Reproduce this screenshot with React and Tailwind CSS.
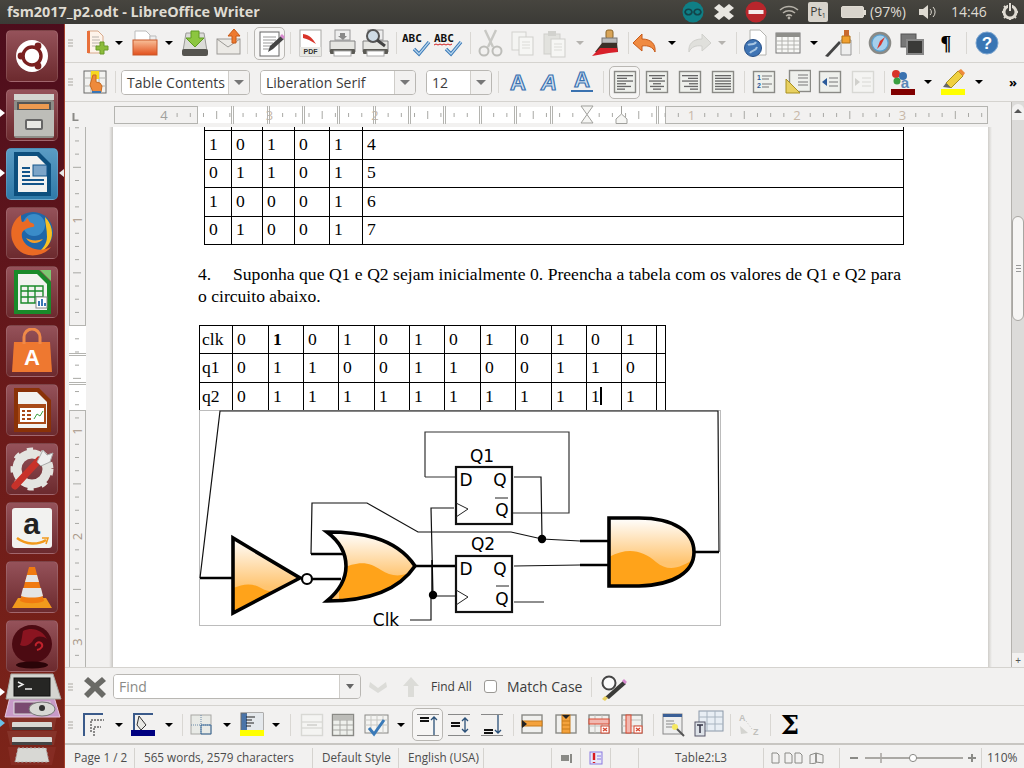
const Ic = ({ w = 32, h = 32, children }) => (
  <svg width={w} height={h} viewBox={`0 0 ${w} ${h}`} className="block shrink-0">{children}</svg>
)

const Slot = ({ w, children }) => <div className={`${w} flex justify-center items-center shrink-0`}>{children}</div>
const Sep = ({ w }) => <div className={`${w} flex justify-center shrink-0`}><div className="w-px h-[22px] bg-[#d9d7d3]" /></div>
const Grip = () => (
  <div className="w-[13px] shrink-0 flex flex-col items-center gap-[1px]">
    <div className="w-[5px] h-[2px] bg-[#cfcdc9] ml-[-2px]" />
    <div className="w-[5px] h-[2px] bg-[#cfcdc9] ml-[-2px]" />
    <div className="w-[5px] h-[2px] bg-[#cfcdc9] ml-[-2px]" />
  </div>
)
const Arrow = ({ w, off }) => (
  <Slot w={w}>
    <div className={`w-0 h-0 border-l-[4px] border-r-[4px] border-t-[4px] border-l-transparent border-r-transparent ${off ? "border-t-[#b5b3af]" : "border-t-black"}`} />
  </Slot>
)
const Active = ({ w, children }) => (
  <div className={`${w} h-[33px] shrink-0 flex justify-center items-center rounded-[5px] border border-[#b9b7b3] bg-[#f6f5f4]`}>{children}</div>
)

// toolbar icons
const NewDoc = () => <Ic><path d="M9 4h10l5 5v17H9z" fill="#fdf3ea" stroke="#d9a98a" /><rect x="8" y="4" width="3" height="22" fill="#e8703a" /><path d="M13 10h7M13 13h8M13 16h8M13 19h5" stroke="#b9b3ad" /><path d="M22 18h4v4h4v4h-4v4h-4v-4h-4v-4h4z" transform="translate(-1 -3) scale(1)" fill="#8cbc3c" stroke="#6b9a28" /></Ic>
const OpenIc = () => <Ic><path d="M6 4h11l4 4v7H6z" fill="#fff" stroke="#bbb" /><path d="M21 9h6v6h-6z" fill="#eee" stroke="#bbb" /><defs><linearGradient id="fo" x1="0" y1="0" x2="0" y2="1"><stop offset="0" stopColor="#f8c09a" /><stop offset="1" stopColor="#e2501c" /></linearGradient></defs><rect x="4" y="13" width="24" height="15" fill="url(#fo)" stroke="#c8582a" /></Ic>
const SaveIc = () => <Ic><path d="M7 6h18l3 18H4z" fill="#dcdcd8" stroke="#9a9a96" /><rect x="3" y="22" width="26" height="7" rx="2" fill="#55544f" /><path d="M12 4h8v7h5l-9 9-9-9h5z" fill="#8cc63f" stroke="#5f9a20" /></Ic>
const MailIc = () => <Ic><rect x="5" y="12" width="23" height="15" fill="#eceae6" stroke="#9c9a96" /><path d="M5 12l11 8 12-8" fill="none" stroke="#9c9a96" /><path d="M20 16v-7h-4l6-7 6 7h-4v7z" fill="#ee7a30" stroke="#c85a18" /></Ic>
const EditIc = () => <Ic><rect x="6" y="5" width="19" height="24" fill="#fff" stroke="#666" /><path d="M9 10h13M9 13h13M9 16h10M9 19h8M9 22h6" stroke="#999" /><path d="M14 25l2-6 11-10 3 3-11 10z" fill="#444" /><path d="M26 9l2-2 3 3-2 2z" fill="#d98ad0" /></Ic>
const PdfIc = () => <Ic><rect x="6" y="3" width="21" height="26" fill="#fff" stroke="#a8a8a4" /><path d="M9 7c7 1 10 5 13 10-5-3-8-5-13-6z" fill="#d8342a" /><rect x="6" y="20" width="21" height="9" fill="#e8e8e4" /><text x="16.5" y="27" textAnchor="middle" fontSize="7" fontWeight="700" fontFamily="Liberation Sans, sans-serif" fill="#333">PDF</text></Ic>
const PrintIc = ({ view }) => <Ic><rect x="9" y="3" width="15" height="10" fill="#eee" stroke="#999" /><path d="M4 14h25v11H4z" fill="#e6e6e2" stroke="#808080" /><rect x="4" y="22" width="25" height="5" rx="1" fill="#5b5a55" /><rect x="8" y="24" width="17" height="5" fill="#fff" stroke="#aaa" />{view ? <g><circle cx="14" cy="9" r="6" fill="#cfdce6" stroke="#555" strokeWidth="2" /><path d="M18 13l8 6" stroke="#444" strokeWidth="3" /></g> : <path d="M14 6h5v3h2l-4 4-5-4h2z" fill="#888" />}</Ic>
const AbcIc = ({ wavy }) => <Ic><text x="2" y="15" fontSize="11" fontWeight="700" fontFamily="DejaVu Sans Mono, monospace" fill="#111">ABC</text>{wavy && <path d="M2 18l2-1 2 1 2-1 2 1 2-1 2 1 2-1 2 1 2-1" fill="none" stroke="#d02020" />}<path d="M14 22l5 5 10-12" fill="none" stroke="#3a7ab8" strokeWidth="3.4" /><path d="M14 22l5 5 10-12" fill="none" stroke="#b6d4ec" strokeWidth="1.2" /></Ic>
const CutIc = () => <Ic><path d="M11 3l8 17M22 3l-8 17" stroke="#c8c8c4" strokeWidth="2.4" /><circle cx="10" cy="24" r="4.5" fill="none" stroke="#bdbdb9" strokeWidth="2" /><circle cx="23" cy="24" r="4.5" fill="none" stroke="#bdbdb9" strokeWidth="2" /></Ic>
const CopyIc = () => <Ic><rect x="4" y="5" width="14" height="18" fill="#f4f4f2" stroke="#d2d2ce" /><rect x="11" y="10" width="14" height="18" fill="#f6f6f4" stroke="#cfcfcb" /><path d="M14 15h8M14 18h8M14 21h8" stroke="#dcdcd8" /></Ic>
const PasteIc = () => <Ic><rect x="5" y="7" width="16" height="20" fill="#e2e2de" stroke="#cfcfcb" /><rect x="9" y="4" width="8" height="5" fill="#d2d2ce" /><rect x="12" y="12" width="14" height="18" fill="#f6f6f4" stroke="#cfcfcb" /><path d="M15 17h8M15 20h8M15 23h8" stroke="#dcdcd8" /></Ic>
const BrushIc = () => <Ic><rect x="15" y="3" width="7" height="9" rx="2" fill="#d8a458" stroke="#8a6428" /><rect x="11" y="11" width="15" height="5" fill="#bbb" stroke="#777" /><path d="M11 16h15l1 9H4z" fill="#3a3028" /><path d="M1 29l8-8h17l1 4-9 1z" fill="#d8202a" /></Ic>
const UndoIc = ({ off }) => <Ic><path d="M12 7L3 16l9 8v-5c6-1 11 1 13 6 1-8-4-13-13-13z" fill={off ? "#e0e0dc" : "#f08a40"} stroke={off ? "#d0d0cc" : "#c85a18"} /></Ic>
const WebIc = () => <Ic><path d="M11 3h10l6 6v19H11z" fill="#fff" stroke="#b4b4b0" /><circle cx="14" cy="21" r="8.5" fill="#3f74b4" stroke="#274f86" /><path d="M9 18c3-2 6 1 8-3M11 26c2-3 6-2 7-6" stroke="#a7c5e2" strokeWidth="2" fill="none" /></Ic>
const TableIc = () => <Ic><rect x="4" y="6" width="24" height="20" fill="#f8f8f6" stroke="#777" /><rect x="4" y="6" width="24" height="4" fill="#8f8f8b" /><path d="M4 14h24M4 18h24M4 22h24M10 10v16M16 10v16M22 10v16" stroke="#b4b4b0" /></Ic>
const DrawIc = () => <Ic><path d="M2 29l14-15 2 2L5 30z" fill="#444" /><path d="M18 13h10v15H18z" fill="#eee" stroke="#999" /><path d="M19 9h8v7h-8z" fill="#f0a030" stroke="#b07018" /><rect x="21" y="3" width="5" height="6" fill="#c86a30" /></Ic>
const NavIc = () => <Ic><circle cx="16" cy="16" r="10" fill="#5aa0d0" stroke="#8a8a86" strokeWidth="2.6" /><circle cx="16" cy="16" r="7.5" fill="#a6d0ec" /><path d="M21 10l-4 8-4 4 3-8z" fill="#d8342a" /></Ic>
const GalleryIc = () => <Ic><rect x="5" y="7" width="15" height="13" fill="#777" stroke="#555" /><rect x="11" y="13" width="16" height="14" fill="#3a3a38" stroke="#888" strokeWidth="2" /></Ic>
const HelpIc = () => <Ic><circle cx="16" cy="16" r="11" fill="#3a76b4" stroke="#7ba4cf" /><text x="16" y="22" textAnchor="middle" fontSize="17" fontWeight="700" fontFamily="Liberation Sans, sans-serif" fill="#fff">?</text></Ic>
const CursorIc = () => <Ic><rect x="5" y="5" width="22" height="22" fill="#f2f2f0" stroke="#6a6a68" /><path d="M5 12h22M5 20h22M12 5v22M20 5v22" stroke="#b4b4b0" /><rect x="12" y="5" width="8" height="8" fill="#f6d820" /><path d="M14 9h3v7l4 1 2 3-1 6h-8l-3-7z" fill="#ee8a3c" stroke="#c86a20" /><rect x="13" y="25" width="9" height="2" fill="#3a76b4" /></Ic>
const AIc = ({ it, ul }) => <Ic><text x="16" y={ul ? 21 : 24} textAnchor="middle" fontSize="22" fontWeight="700" fontStyle={it ? "italic" : "normal"} fontFamily="Liberation Sans, sans-serif" fill="#d4e2f0" stroke="#3a72b0" strokeWidth="1.2">A</text>{ul && <path d="M5 25h22" stroke="#3a72b0" strokeWidth="2" />}</Ic>

const Box = ({ children, off }) => (
  <Ic w={24} h={24}>
    <rect x="1.5" y="1.5" width="21" height="21" fill={off ? "#f4f4f2" : "#eef0ec"} stroke={off ? "#d8d8d4" : "#8a8a86"} strokeWidth="1.4" />
    {children}
  </Ic>
)
const AlignIc = ({ k }) => {
  const rows = {
    l: [[4, 16], [4, 10], [4, 16], [4, 9], [4, 14], [4, 8]],
    c: [[4, 16], [7, 10], [4, 16], [8, 8], [5, 14], [8, 8]],
    r: [[4, 16], [10, 10], [4, 16], [11, 9], [6, 14], [12, 8]],
    j: [[4, 16], [4, 16], [4, 16], [4, 16], [4, 16], [4, 16]],
  }[k]
  return <Box>{rows.map((r, i) => <rect key={i} x={r[0]} y={5 + i * 2.7} width={r[1]} height="1.3" fill="#666" />)}</Box>
}
const ListNum = () => <Box><text x="5" y="10" fontSize="7" fontWeight="700" fill="#2a5a9a" fontFamily="Liberation Sans, sans-serif">1</text><text x="5" y="18" fontSize="7" fontWeight="700" fill="#2a5a9a" fontFamily="Liberation Sans, sans-serif">2</text><path d="M10 6h10M10 9h7M10 14h10M10 17h7" stroke="#777" /></Box>
const ListBul = () => <Ic w={26} h={26}><rect x="4.5" y="1.5" width="21" height="21" fill="#eef0ec" stroke="#8a8a86" strokeWidth="1.4" /><path d="M13 6h10M13 9h10M13 13h10M13 16h10" stroke="#777" /><path d="M1 10l14 14H1z" fill="#e8d060" stroke="#a89020" /></Ic>
const IndL = ({ off }) => <Box off={off}><path d="M4 12l5-4v8z" fill={off ? "#d0d0cc" : "#2a5a9a"} /><path d="M11 8h9M11 12h9M11 16h9" stroke={off ? "#d8d8d4" : "#777"} strokeWidth="1.2" /></Box>
const IndR = () => <Box off><path d="M9 12l-5-4v8z" fill="#d0d0cc" /><path d="M11 8h9M11 12h9M11 16h9" stroke="#d8d8d4" strokeWidth="1.2" /></Box>
const CharBg = () => <Ic w={26} h={28}><circle cx="6" cy="6" r="4" fill="#d8342a" /><circle cx="7" cy="13" r="3.5" fill="#3aa040" /><circle cx="13" cy="8" r="4" fill="#3a72b0" /><text x="15" y="20" textAnchor="middle" fontSize="15" fontWeight="700" fill="#5a88b8" fontFamily="Liberation Sans, sans-serif">a</text><rect x="1" y="21" width="24" height="6" fill="#800000" /></Ic>
const Highlight = () => <Ic w={26} h={28}><path d="M6 15L18 3l5 5-12 12z" fill="#f0d040" stroke="#a89020" /><path d="M18 3l3-2 4 4-2 3z" fill="#ee8a3c" /><path d="M3 19l3-4 5 5z" fill="#666" /><rect x="1" y="21" width="24" height="6" fill="#ffff00" /></Ic>
const FrameIc = ({ fill }) => <Ic w={28} h={28}><path d="M3 25V3h19" fill="none" stroke="#3a5a8a" strokeWidth="2" />{fill ? <g><path d="M8 5l7 9-5 5-4-5z" fill="#e8e8e4" stroke="#333" /><rect x="0" y="19" width="24" height="6" fill="#000080" /></g> : <g><path d="M10 21V9h13M13 25v-9h7" fill="none" stroke="#222" strokeDasharray="2 1" /></g>}</Ic>
const TblBorders = () => <Ic w={26} h={26}><rect x="2" y="3" width="20" height="19" fill="#e8eae6" stroke="#a8a8a4" /><path d="M2 13h20M12 3v19" stroke="#6a8aaa" strokeDasharray="1 1" /><path d="M12 13h10v9H12z" fill="none" stroke="#3a6a9a" /></Ic>
const TblBack = () => <Ic w={26} h={26}><rect x="2" y="1" width="22" height="18" fill="#4a74a8" stroke="#6a6a68" /><rect x="8" y="1" width="16" height="18" fill="#e4e8ec" /><path d="M7 5h9M7 8h6M7 11h8M7 14h5" stroke="#222" /><rect x="1" y="18" width="24" height="6" fill="#ffff00" /></Ic>
const Merge = () => <Box off><path d="M2 9h20M2 15h20" stroke="#d0d0cc" /><path d="M7 12h10" stroke="#bcbcb8" /></Box>
const Split = () => <Box><path d="M2 7h20M2 12h20M2 17h20M9 2v20M16 2v20" stroke="#a8a8a4" /><rect x="2" y="2" width="20" height="5" fill="#bcbcb8" /></Box>
const AutoF = () => <Ic w={28} h={28}><rect x="3" y="4" width="23" height="18" fill="#f4f4f2" stroke="#8a8a86" /><path d="M3 9h23M3 14h23M9 4v18M15 4v18M21 4v18" stroke="#c8c8c4" /><path d="M7 17l5 6 10-14" fill="none" stroke="#3a7ab8" strokeWidth="3" /></Ic>
const VAlign = ({ k }) => (
  <Ic w={24} h={24}>
    <path d="M1 1.5h22M1 22.5h22" stroke="#888" />
    <path d={k === "t" ? "M4 5h9M4 8h9" : k === "c" ? "M4 10h9M4 13h9" : "M4 17h9M4 20h9"} stroke="#111" strokeWidth="2" />
    <path d={k === "t" ? "M18 22V4m-3 3l3-3 3 3" : k === "c" ? "M18 5v14m-3-3l3 3 3-3M15 8l3-3 3 3" : "M18 2v18m-3-3l3 3 3-3"} stroke="#2a5078" strokeWidth="1.3" fill="none" />
  </Ic>
)
const RowCol = ({ k }) => (
  <Ic w={26} h={26}>
    <rect x="3" y="3" width="20" height="18" fill="#f0f0ee" stroke="#8a8a86" strokeWidth="1.4" />
    {k === "ir" && <g><rect x="3" y="9" width="20" height="5" fill="#f4a23c" stroke="#c87a18" /><path d="M3 8l5 4-5 4z" fill="#222" /></g>}
    {k === "ic" && <g><rect x="9" y="3" width="8" height="18" fill="#f4a23c" stroke="#c87a18" /><path d="M9 9h8M9 13h8M9 17h8" stroke="#c87a18" /><path d="M9 3h8l-4 4z" fill="#222" /></g>}
    {k === "dr" && <g><path d="M3 14h20M9 3v18M16 3v18" stroke="#c0c0bc" /><rect x="3" y="7" width="20" height="5" fill="#f2b8b0" stroke="#d84830" /><rect x="15" y="14" width="8" height="7" fill="#fff" stroke="#d84830" /><path d="M17 16l4 3M21 16l-4 3" stroke="#d84830" strokeWidth="1.4" /></g>}
    {k === "dc" && <g><path d="M3 8h20M3 14h20" stroke="#c0c0bc" /><rect x="7" y="3" width="5" height="18" fill="#f2b8b0" stroke="#d84830" /><rect x="15" y="14" width="8" height="7" fill="#fff" stroke="#d84830" /><path d="M17 16l4 3M21 16l-4 3" stroke="#d84830" strokeWidth="1.4" /></g>}
  </Ic>
)
const TblProp = () => <Ic w={26} h={26}><rect x="2" y="2" width="19" height="20" fill="#eee" stroke="#888" /><rect x="2" y="2" width="19" height="3" fill="#3a5f96" /><path d="M5 9h8M5 12h9M5 15h6" stroke="#888" /><circle cx="14" cy="15" r="3" fill="#f6e860" /><path d="M16 17l7 7" stroke="#555" strokeWidth="2" /></Ic>
const TblSort = () => <Ic w={30} h={30}><rect x="5" y="1" width="24" height="20" fill="#e8eef4" stroke="#8a98a8" /><path d="M5 7h24M5 14h24M13 1v20M21 1v20" stroke="#a8b4c0" /><rect x="1" y="12" width="10" height="14" fill="#dde2e8" stroke="#556" /><path d="M3 15h6M6 15v8" stroke="#334" strokeWidth="1.5" /></Ic>
const SortAz = () => <Ic w={28} h={28}><text x="3" y="10" fontSize="9" fontWeight="700" fill="#c0c0bc" fontFamily="Liberation Sans, sans-serif">A</text><text x="17" y="24" fontSize="9" fontWeight="700" fill="#c0c0bc" fontFamily="Liberation Sans, sans-serif">Z</text><path d="M10 10l6 8" stroke="#c8c8c4" strokeDasharray="1 2" /><path d="M4 15l8 7-7 1z" fill="#d4d4d0" /></Ic>
const FindTools = () => <Ic w={28} h={28}><circle cx="10" cy="10" r="6.5" fill="#fafafa" stroke="#444" strokeWidth="2" /><path d="M6 24L24 8l3 3L10 26z" fill="#3a3a38" /><path d="M23 8l2-2 3 3-2 2z" fill="#d88ad0" /><path d="M3 26l3-3 3 2-3 3z" fill="#e8d060" /></Ic>

const Title = () => (
  <div className="h-6 shrink-0 flex items-center bg-gradient-to-b from-[#47453f] to-[#3b3a36] text-[#dfdbd2] pl-[7px]">
    <span className="w-[676px] font-['Open_Sans',sans-serif] font-bold text-[14.4px] leading-none whitespace-nowrap">fsm2017_p2.odt - LibreOffice Writer</span>
    <Slot w="w-[24px]"><Ic w={22} h={22}><circle cx="11" cy="11" r="10.5" fill="#0f7f86" /><path d="M3 11a3.6 3.6 0 017 0 3.6 3.6 0 01-7 0zM12 11a3.6 3.6 0 017 0 3.6 3.6 0 01-7 0z" fill="none" stroke="#12444a" strokeWidth="1.6" /></Ic></Slot>
    <Slot w="w-[38px]"><Ic w={20} h={20}><path d="M5 2l5 4 5-4 5 4-5 4 5 4-5 4-5-4-5 4-5-4 5-4-5-4z" fill="#e8e6e0" /></Ic></Slot>
    <Slot w="w-[26px]"><Ic w={22} h={22}><circle cx="11" cy="11" r="10.5" fill="#b8262c" /><rect x="3.5" y="9" width="15" height="4" fill="#f4ecec" /></Ic></Slot>
    <Slot w="w-[39px]"><Ic w={20} h={16}><path d="M1 6a13 13 0 0118 0M4 9a9 9 0 0112 0M7 12a5 5 0 016 0" fill="none" stroke="#b5b1a8" strokeWidth="1.5" /><circle cx="10" cy="14" r="1.4" fill="#b5b1a8" /></Ic></Slot>
    <div className="w-[20px] h-[20px] shrink-0 bg-[#d8d4cc] rounded-[2px] flex justify-center items-center text-[#3c3b37] text-[12px] font-['Open_Sans',sans-serif] leading-none">Pt<span className="text-[7px] mt-[6px]">1</span></div>
    <div className="ml-[13px] w-[23px] h-[12px] shrink-0 border border-[#dfdbd2] rounded-[2px] bg-[#d8d4cc]" />
    <div className="w-[2px] h-[5px] shrink-0 bg-[#dfdbd2]" />
    <span className="ml-[4px] w-[45px] shrink-0 font-['Open_Sans',sans-serif] text-[14px] leading-none">(97%)</span>
    <Slot w="w-[26px]"><Ic w={20} h={16}><path d="M1 5h4l5-4v14l-5-4H1z" fill="#dfdbd2" /><path d="M12 5a4 4 0 010 6M15 3a7 7 0 010 10" fill="none" stroke="#dfdbd2" /></Ic></Slot>
    <span className="ml-[10px] w-[45px] shrink-0 font-['Open_Sans',sans-serif] text-[14px] leading-none">14:46</span>
    <Slot w="w-[28px]"><Ic w={18} h={18}><circle cx="9" cy="9" r="6" fill="none" stroke="#dfdbd2" strokeWidth="3" /><path d="M9 0v8" stroke="#3c3b37" strokeWidth="4" /><path d="M9 0v8" stroke="#dfdbd2" strokeWidth="2" /><path d="M9 1v2M9 15v2M1 9h2M15 9h2M3 3l2 2M13 13l2 2M3 15l2-2" stroke="#dfdbd2" strokeWidth="2" /></Ic></Slot>
  </div>
)

const Toolbar1 = () => (
  <div className="h-[39px] shrink-0 flex items-center border-b border-[#d5d3cf] bg-[#f2f1f0]">
    <Grip />
    <Slot w="w-[34px]"><NewDoc /></Slot>
    <Arrow w="w-[14px]" />
    <Slot w="w-[38px]"><OpenIc /></Slot>
    <Arrow w="w-[10px]" />
    <Slot w="w-[42px]"><SaveIc /></Slot>
    <Slot w="w-[24px]"><MailIc /></Slot>
    <Sep w="w-[14px]" />
    <Active w="w-[31px]"><EditIc /></Active>
    <Sep w="w-[10px]" />
    <Slot w="w-[30px]"><PdfIc /></Slot>
    <Slot w="w-[34px]"><PrintIc /></Slot>
    <Slot w="w-[32px]"><PrintIc view /></Slot>
    <Sep w="w-[10px]" />
    <Slot w="w-[30px]"><AbcIc /></Slot>
    <Slot w="w-[34px]"><AbcIc wavy /></Slot>
    <Sep w="w-[10px]" />
    <Slot w="w-[30px]"><CutIc /></Slot>
    <Slot w="w-[38px]"><CopyIc /></Slot>
    <Slot w="w-[24px]"><PasteIc /></Slot>
    <Arrow w="w-[26px]" off />
    <Slot w="w-[28px]"><BrushIc /></Slot>
    <Sep w="w-[14px]" />
    <Slot w="w-[22px]"><UndoIc /></Slot>
    <Arrow w="w-[30px]" />
    <Slot w="w-[22px]"><div className="scale-x-[-1]"><UndoIc off /></div></Slot>
    <Arrow w="w-[26px]" off />
    <Sep w="w-[2px]" />
    <Slot w="w-[36px]"><WebIc /></Slot>
    <Slot w="w-[30px]"><TableIc /></Slot>
    <Arrow w="w-[22px]" />
    <Slot w="w-[28px]"><DrawIc /></Slot>
    <Sep w="w-[12px]" />
    <Slot w="w-[30px]"><NavIc /></Slot>
    <Slot w="w-[34px]"><GalleryIc /></Slot>
    <Slot w="w-[34px]"><span className="font-['Liberation_Serif',serif] font-bold text-[20px] leading-none text-black">¶</span></Slot>
    <Sep w="w-[6px]" />
    <Slot w="w-[36px]"><HelpIc /></Slot>
  </div>
)

const Combo = ({ w, box, text }) => (
  <div className={`${w} h-[25px] shrink-0 flex rounded-[4px] border border-[#b9b7b3] overflow-hidden`}>
    <div className={`${box} bg-white border-r border-[#cfcdc9] pl-[5px] text-[14px] leading-[23px] text-[#3c3c3c] font-['Open_Sans',sans-serif] overflow-hidden whitespace-nowrap`}>{text}</div>
    <div className="flex-1 flex justify-center items-center bg-[#f2f1f0]">
      <div className="w-0 h-0 border-l-[5px] border-r-[5px] border-t-[5px] border-l-transparent border-r-transparent border-t-[#777]" />
    </div>
  </div>
)

const Toolbar2 = () => (
  <div className="h-[39px] shrink-0 flex items-center border-b border-[#d5d3cf] bg-[#f2f1f0]">
    <Grip />
    <Slot w="w-[34px]"><CursorIc /></Slot>
    <Sep w="w-[6px]" />
    <div className="ml-[3px]"><Combo w="w-[129px]" box="w-[107px]" text="Table Contents" /></div>
    <div className="ml-[10px]"><Combo w="w-[156px]" box="w-[134px]" text="Liberation Serif" /></div>
    <div className="ml-[10px]"><Combo w="w-[66px]" box="w-[44px]" text="12" /></div>
    <Sep w="w-[12px]" />
    <Slot w="w-[28px]"><AIc /></Slot>
    <Slot w="w-[34px]"><AIc it /></Slot>
    <Slot w="w-[32px]"><AIc ul /></Slot>
    <Sep w="w-[11px]" />
    <Active w="w-[31px]"><AlignIc k="l" /></Active>
    <Slot w="w-[34px]"><AlignIc k="c" /></Slot>
    <Slot w="w-[32px]"><AlignIc k="r" /></Slot>
    <Slot w="w-[34px]"><AlignIc k="j" /></Slot>
    <Sep w="w-[8px]" />
    <Slot w="w-[32px]"><ListNum /></Slot>
    <Slot w="w-[36px]"><ListBul /></Slot>
    <Slot w="w-[28px]"><IndL /></Slot>
    <Slot w="w-[38px]"><IndR /></Slot>
    <Sep w="w-[4px]" />
    <Slot w="w-[34px]"><CharBg /></Slot>
    <Arrow w="w-[16px]" />
    <Slot w="w-[34px]"><Highlight /></Slot>
    <Arrow w="w-[18px]" />
    <span className="ml-[21px] text-[13px] leading-none font-bold text-black font-['Open_Sans',sans-serif]">»</span>
  </div>
)

const HRuler = () => {
  const x0 = 586 - 65
  const ticks = []
  for (let i = -32; i <= 32; i++) {
    const x = x0 + i * 13.19
    if (x < 52 || x > 918) continue
    if (i % 8 === 0) continue
    ticks.push(<path key={i} d={`M${x} ${i % 4 === 0 ? 9 : 11}v${i % 4 === 0 ? 8 : 4}`} stroke="#a8a8a4" />)
  }
  const nums = [[-4, "4"], [-3, "3"], [-2, "2"], [1, "1"], [2, "2"], [3, "3"]]
  const cols = [232, 268, 303, 338, 374, 409, 444, 480, 515, 551, 657]
  return (
    <div className="h-[25px] shrink-0 bg-[#f2f1f0]">
      <svg width="946" height="25" className="block">
        <path d="M7.5 11v8h6v-1.5h-4v-6.5z" fill="#8a8a86" />
        <rect x="49.5" y="4.5" width="83" height="17" fill="#f2f1f0" stroke="#b4b4b0" />
        <rect x="133" y="5" width="467" height="16" fill="#fff" />
        <rect x="600.5" y="4.5" width="322" height="17" fill="#f2f1f0" stroke="#b4b4b0" />
        {ticks}
        {nums.map(n => <text key={n[0] + n[1]} x={x0 + n[0] * 105.5} y="18" textAnchor="middle" fontSize="13" fontFamily="Open Sans, sans-serif" fill={n[0] === -4 ? "#a0a09c" : "#c8b8a8"}>{n[1]}</text>)}
        {cols.map(c => <path key={c} d={`M${c - 65 - 0.5} 4v18M${c - 65 + 1.5} 4v18`} stroke="#b4b4b0" />)}
        <path d="M516 4h12l-6 8.5 6 8.5h-12l6-8.5z" fill="#f6f6f4" stroke="#a0a09c" />
        <path d="M556.5 4v8l-5.5 5v4.5h11V17l-5.5-5V4" fill="#f6f6f4" stroke="#a0a09c" />
      </svg>
    </div>
  )
}

const VRuler = () => {
  const y0 = 325.6 - 127
  const ticks = []
  for (let i = -16; i <= 28; i++) {
    const y = y0 + i * 13.19
    if (i % 8 === 0) continue
    ticks.push(<path key={i} d={`M${i % 4 === 0 ? 4 : 6} ${y}h${i % 4 === 0 ? 8 : 4}`} stroke="#a8a8a4" />)
  }
  return (
    <svg width="17" height="540" className="block ml-[4px]">
      <rect x="0.5" y="-2" width="16" height="200.5" fill="#f2f1f0" stroke="#b4b4b0" />
      <rect x="0" y="199" width="17" height="84" fill="#fff" />
      <rect x="0.5" y="283.5" width="16" height="258" fill="#f2f1f0" stroke="#b4b4b0" />
      {ticks}
      {[226, 255].map(y => <path key={y} d={`M0 ${y}.5h17M0 ${y + 2}.5h17`} stroke="#b4b4b0" />)}
      {[-1, 1, 2, 3].map(n => <text key={n} x="0" y="0" textAnchor="middle" fontSize="13" fontFamily="Open Sans, sans-serif" fill="#a89888" transform={`translate(13 ${y0 + n * 105.5}) rotate(-90)`}>{Math.abs(n)}</text>)}
    </svg>
  )
}

const Row1 = ({ v }) => (
  <tr className="h-[28.5px]">
    {v.map((c, i) => <td key={i} className="border border-black pl-[4px] leading-none">{c}</td>)}
  </tr>
)

const FirstTable = () => (
  <table className="-mt-[25.5px] ml-[91px] w-[700px] table-fixed border-collapse font-['Liberation_Serif',serif] text-[17.6px] text-black">
    <colgroup>
      <col className="w-[27px]" /><col className="w-[31px]" /><col className="w-[32px]" /><col className="w-[35px]" /><col className="w-[33px]" /><col />
    </colgroup>
    <tbody>
      <Row1 v={[0, 0, 1, 0, 1, 3]} />
      <Row1 v={[1, 0, 1, 0, 1, 4]} />
      <Row1 v={[0, 1, 1, 0, 1, 5]} />
      <Row1 v={[1, 0, 0, 0, 1, 6]} />
      <Row1 v={[0, 1, 0, 0, 1, 7]} />
    </tbody>
  </table>
)

const SecondTable = () => (
  <table className="mt-[18px] ml-[86px] w-[467px] table-fixed border-collapse font-['Liberation_Serif',serif] text-[17.6px] text-black">
    <colgroup>
      <col className="w-[33px]" /><col className="w-[36px]" /><col className="w-[35px]" /><col className="w-[35px]" /><col className="w-[36px]" /><col className="w-[35px]" /><col className="w-[35px]" /><col className="w-[36px]" /><col className="w-[35px]" /><col className="w-[36px]" /><col className="w-[35px]" /><col className="w-[35px]" /><col className="w-[35px]" /><col className="w-[9px]" />
    </colgroup>
    <tbody>
      <tr className="h-[28px]">
        {["clk", 0, 1, 0, 1, 0, 1, 0, 1, 0, 1, 0, 1, ""].map((c, i) => <td key={i} className={`border border-black leading-none ${i === 0 ? "pl-[2px]" : "pl-[4px]"} ${i === 2 ? "font-bold" : ""}`}>{c}</td>)}
      </tr>
      <tr className="h-[29px]">
        {["q1", 0, 1, 1, 0, 0, 1, 1, 0, 0, 1, 1, 0, ""].map((c, i) => <td key={i} className={`border border-black leading-none ${i === 0 ? "pl-[2px]" : "pl-[4px]"}`}>{c}</td>)}
      </tr>
      <tr className="h-[28px]">
        {["q2", 0, 1, 1, 1, 1, 1, 1, 1, 1, 1, 1, 1, ""].map((c, i) => (
          <td key={i} className={`border border-black leading-none ${i === 0 ? "pl-[2px]" : "pl-[4px]"}`}>
            {i === 11 ? <span className="inline-block h-[18px] leading-[18px] border-r-2 border-black">{c}</span> : c}
          </td>
        ))}
      </tr>
    </tbody>
  </table>
)

const Gate = ({ d, clip, wave }) => (
  <g>
    <clipPath id={clip}><path d={d} /></clipPath>
    <path d={d} fill="url(#gateTop)" />
    <path d={wave} fill="#ffa31a" clipPath={`url(#${clip})`} />
    <path d={d} fill="none" stroke="#000" strokeWidth="3.6" strokeLinejoin="miter" />
  </g>
)

const Circuit = () => (
  <svg width="522" height="216" className="block ml-[86px] -mt-[1px]" fontFamily="DejaVu Sans, sans-serif">
    <defs>
      <linearGradient id="gateTop" x1="0" y1="0" x2="0" y2="1">
        <stop offset="0" stopColor="#ffffff" />
        <stop offset="0.65" stopColor="#ffc470" />
      </linearGradient>
    </defs>
    <rect x="0.5" y="0.5" width="521" height="215" fill="#fff" stroke="#bcbcbc" />
    <g fill="none" stroke="#111" strokeWidth="1.2">
      <path d="M1 168L21 1h498l1 141" />
      <path d="M112 144l1-51h55l51 29h93l31 7 38 2" />
      <path d="M226 67V22h144v81h-57M226 67h30" stroke="#333" />
      <path d="M315 67h27l1 62" />
      <path d="M255 98h-23l2 87" />
      <path d="M234 186h22M232 185v25h-21" />
      <path d="M315 156l66-1" />
      <path d="M315 192h30" stroke="#444" />
    </g>
    <g fill="none" stroke="#000" strokeWidth="2.4">
      <path d="M1 168h33M114 169h28M112 144h32M216 156h40" />
      <path d="M381 131h29M381 155h29M495 142h25" />
      <path d="M233 185V150" strokeWidth="1.4" />
    </g>
    <Gate clip="cNot" d="M34 128v75l67-35z" wave="M30 180c12-6 22-8 32-2s20 4 42-1v40H30z" />
    <circle cx="108" cy="169" r="5" fill="#fff" stroke="#000" strokeWidth="2.2" />
    <Gate clip="cOr" d="M128 122c30 0 68 4 88 34-20 30-58 35-88 35 12-10 19-22 19-35s-7-25-19-34z" wave="M140 160c20-10 30-8 42 0s26 8 40-6v50H140z" />
    <Gate clip="cAnd" d="M410 108h30c35 0 55 14 55 34s-20 33-55 34h-30z" wave="M405 150c22-14 38-10 52 2s28 4 42-6v40h-94z" />
    <rect x="257" y="57" width="56" height="57" fill="#fff" stroke="#111" strokeWidth="2.2" />
    <rect x="257" y="146" width="56" height="56" fill="#fff" stroke="#111" strokeWidth="2.2" />
    <path d="M257 93l12 6-12 8M257 180l12 7-12 8" fill="none" stroke="#222" />
    <circle cx="343" cy="129" r="4.2" fill="#000" />
    <circle cx="234" cy="185" r="4.2" fill="#000" />
    <g fontSize="17" fill="#000" textAnchor="middle">
      <text x="283" y="52">Q1</text>
      <text x="284" y="140">Q2</text>
      <text x="267" y="76">D</text>
      <text x="301" y="76">Q</text>
      <text x="303" y="106">Q</text>
      <text x="267" y="165">D</text>
      <text x="301" y="165">Q</text>
      <text x="303" y="195">Q</text>
      <text x="187" y="216">Clk</text>
    </g>
    <path d="M296 88h13M297 176h13" stroke="#222" />
  </svg>
)

const Page = () => (
  <div className="w-[875px] shrink-0 bg-white overflow-hidden">
    <FirstTable />
    <p className="mt-[18px] ml-[85px] w-[703px] font-['Liberation_Serif',serif] text-[17.6px] leading-[22px] text-black text-justify">
      <span className="inline-block w-[35px]">4.</span>Suponha que Q1 e Q2 sejam inicialmente 0. Preencha a tabela com os valores de Q1 e Q2 para o circuito abaixo.
    </p>
    <SecondTable />
    <Circuit />
  </div>
)

const Scrollbar = () => (
  <div className="w-[13px] shrink-0 bg-[#dcdbd9] border-l border-[#b4b2ae] flex flex-col items-center">
    <div className="w-full h-[16px] mt-[2px] bg-[#f2f1f0] rounded-t-[6px] flex justify-center pt-[5px]">
      <div className="w-0 h-0 border-l-[4px] border-r-[4px] border-b-[4px] border-l-transparent border-r-transparent border-b-[#555]" />
    </div>
    <div className="w-full h-[105px] mt-[96px] bg-[#f6f5f4] rounded-[6px] border border-[#a8a6a2] flex flex-col justify-center items-center gap-[2px]">
      <div className="w-[5px] h-px bg-[#999]" />
      <div className="w-[5px] h-px bg-[#999]" />
      <div className="w-[5px] h-px bg-[#999]" />
    </div>
    <div className="mt-auto w-full h-[14px] bg-[#f2f1f0] flex justify-center items-center text-[10px] leading-none text-[#555]">+</div>
  </div>
)

const FindBar = () => (
  <div className="h-[39px] shrink-0 flex items-center border-b border-t border-[#d5d3cf] bg-[#f2f1f0]">
    <Grip />
    <Slot w="w-[34px]"><Ic w={24} h={24}><path d="M5 2l7 6 7-6 4 4-7 6 7 7-4 4-7-7-7 7-4-4 7-7-7-6z" fill="#6a6a66" /></Ic></Slot>
    <div className="ml-[1px] w-[248px] h-[25px] shrink-0 flex rounded-[4px] border border-[#b9b7b3] overflow-hidden">
      <div className="w-[226px] bg-white border-r border-[#cfcdc9] pl-[5px] text-[14px] leading-[23px] text-[#8a8a86] font-['Open_Sans',sans-serif]">Find</div>
      <div className="flex-1 flex justify-center items-center bg-[#f2f1f0]">
        <div className="w-0 h-0 border-l-[4px] border-r-[4px] border-t-[5px] border-l-transparent border-r-transparent border-t-[#666]" />
      </div>
    </div>
    <Slot w="w-[34px]"><Ic w={20} h={14}><path d="M2 2l8 6 8-6 1 5-9 6-9-6z" fill="#dcdcd8" /></Ic></Slot>
    <Slot w="w-[32px]"><Ic w={20} h={22}><path d="M10 1l8 9h-5v11H7V10H2z" fill="#dcdcd8" /></Ic></Slot>
    <span className="ml-[4px] w-[53px] shrink-0 text-[12px] text-[#3c3c3c] font-['Open_Sans',sans-serif] whitespace-nowrap">Find All</span>
    <div className="w-[13px] h-[13px] shrink-0 rounded-[3px] border border-[#9a9894] bg-white" />
    <span className="ml-[10px] w-[84px] shrink-0 text-[14px] text-[#3c3c3c] font-['Open_Sans',sans-serif] whitespace-nowrap">Match Case</span>
    <div className="w-px h-[20px] shrink-0 bg-[#d9d7d3]" />
    <Slot w="w-[41px]"><FindTools /></Slot>
  </div>
)

const Toolbar3 = () => (
  <div className="h-[39px] shrink-0 flex items-center border-b-2 border-[#c8c6c2] bg-[#f2f1f0]">
    <Grip />
    <Slot w="w-[33px]"><FrameIc /></Slot>
    <Arrow w="w-[15px]" />
    <Slot w="w-[38px]"><FrameIc fill /></Slot>
    <Arrow w="w-[10px]" />
    <Sep w="w-[16px]" />
    <Slot w="w-[24px]"><TblBorders /></Slot>
    <Arrow w="w-[26px]" />
    <Slot w="w-[24px]"><TblBack /></Slot>
    <Arrow w="w-[24px]" />
    <Sep w="w-[4px]" />
    <Slot w="w-[40px]"><Merge /></Slot>
    <Slot w="w-[22px]"><Split /></Slot>
    <Slot w="w-[44px]"><AutoF /></Slot>
    <Arrow w="w-[6px]" />
    <div className="ml-[8px]"><Active w="w-[31px]"><VAlign k="t" /></Active></div>
    <Slot w="w-[32px]"><VAlign k="c" /></Slot>
    <Slot w="w-[34px]"><VAlign k="b" /></Slot>
    <Sep w="w-[8px]" />
    <Slot w="w-[30px]"><RowCol k="ir" /></Slot>
    <Slot w="w-[38px]"><RowCol k="ic" /></Slot>
    <Slot w="w-[28px]"><RowCol k="dr" /></Slot>
    <Slot w="w-[38px]"><RowCol k="dc" /></Slot>
    <Sep w="w-[4px]" />
    <Slot w="w-[38px]"><TblProp /></Slot>
    <Slot w="w-[32px]"><TblSort /></Slot>
    <Sep w="w-[10px]" />
    <Slot w="w-[30px]"><SortAz /></Slot>
    <Sep w="w-[10px]" />
    <Slot w="w-[30px]"><span className="font-['DejaVu_Serif',serif] font-bold text-[26px] leading-none text-black">Σ</span></Slot>
  </div>
)

const Cell = ({ w, children, center }) => (
  <div className={`${w} h-[20px] shrink-0 flex items-center ${center ? "justify-center" : "pl-[9px]"} border-r border-[#d5d3cf] whitespace-nowrap`}>{children}</div>
)

const Status = () => (
  <div className="h-[23px] shrink-0 flex items-center bg-[#f2f1f0] text-[11.7px] text-[#4c4c4c] font-['Open_Sans',sans-serif] pt-[3px]">
    <Cell w="w-[70px]">Page 1 / 2</Cell>
    <Cell w="w-[178px]">565 words, 2579 characters</Cell>
    <Cell w="w-[86px]">Default Style</Cell>
    <Cell w="w-[85px]">English (USA)</Cell>
    <div className="w-[68px] h-[20px] shrink-0 border-r border-[#d5d3cf]" />
    <Cell w="w-[29px]" center><div className="w-[8px] h-[6px] bg-[#8a8a86] mr-[1px]" /><div className="w-[2px] h-[9px] border border-[#8a8a86]" /></Cell>
    <Cell w="w-[30px]" center><Ic w={14} h={14}><rect x="1" y="1" width="12" height="12" fill="#e8e8f8" stroke="#8a7ae0" /><path d="M5 2v7M5 11v1" stroke="#d81820" strokeWidth="2.4" /><path d="M8 5h4M8 8h4" stroke="#8a7ae0" /></Ic></Cell>
    <div className="w-[28px] h-[20px] shrink-0 border-r border-[#d5d3cf]" />
    <Cell w="w-[125px]" center>Table2:L3</Cell>
    <Cell w="w-[76px]" center>
      <Ic w={64} h={12}><path d="M2 1h5l2 2v8H2zM15 1h5l2 2v8h-7zM25 1h5l2 2v8h-7zM40 3l6-2v10l-6 1zM46 1l7 2v8l-7-1zM46 1v9" fill="none" stroke="#8a8a86" /></Ic>
    </Cell>
    <div className="w-[142px] h-[20px] shrink-0 border-r border-[#d5d3cf] flex items-center">
      <Ic w={142} h={14}><path d="M10 7h8" stroke="#8a8a86" strokeWidth="2" /><path d="M25 7h98" stroke="#aaa8a4" strokeWidth="2" /><path d="M41 2v10" stroke="#aaa8a4" strokeWidth="1.6" /><circle cx="73" cy="7" r="3.6" fill="#fff" stroke="#8a8a86" /><path d="M128 7h8M132 3v8" stroke="#8a8a86" strokeWidth="2" /></Ic>
    </div>
    <span className="ml-[5px] text-[12px]">110%</span>
  </div>
)

const Tile = ({ children, on }) => (
  <div className={`w-[52px] h-[52px] shrink-0 rounded-[5px] flex justify-center items-center overflow-hidden border border-[#ffffff20] bg-gradient-to-b ${on ? "from-[#5a9cc4] to-[#2f7aa8]" : "from-[#95525a] to-[#6c2a2e]"}`}>{children}</div>
)

const Pip = ({ cls }) => <div className={`absolute w-0 h-0 border-t-[4px] border-b-[4px] border-t-transparent border-b-transparent ${cls}`} />

const Launcher = () => (
  <div className="relative w-[65px] shrink-0 flex flex-col items-center gap-[7px] pt-[6px] pr-[1px] overflow-hidden border-r border-[#a5402c] bg-gradient-to-b from-[#4d0d1c] via-[#6a1a1a] to-[#7c2419]">
    <Pip cls="left-0 top-[85px] border-l-[5px] border-l-white" />
    <Pip cls="left-0 top-[145px] border-l-[5px] border-l-white" />
    <Pip cls="left-[59px] top-[145px] border-r-[5px] border-r-[#e8e8e8]" />
    <Tile>
      <Ic w={46} h={46}><circle cx="23" cy="23" r="16" fill="#fff" /><circle cx="23" cy="23" r="9" fill="none" stroke="#7a2020" strokeWidth="3.4" /><circle cx="12" cy="23" r="3.4" fill="#7a2020" /><circle cx="29" cy="13" r="3.4" fill="#7a2020" /><circle cx="29" cy="33" r="3.4" fill="#7a2020" /></Ic>
    </Tile>
    <Tile>
      <Ic w={46} h={46}><rect x="5" y="2" width="40" height="6" fill="#d4d4d0" /><rect x="5" y="8" width="40" height="38" rx="2" fill="#8e8e88" /><rect x="8" y="10" width="34" height="10" fill="#555" /><rect x="10" y="12" width="30" height="5" fill="#ee9a50" /><rect x="5" y="18" width="40" height="26" fill="#bdbdb8" /><rect x="17" y="28" width="16" height="9" rx="1" fill="#e8e8e4" stroke="#666" strokeWidth="2" /></Ic>
    </Tile>
    <Tile on>
      <Ic w={46} h={46}><path d="M5 1h25l12 12v32H5z" fill="#0d4f7d" /><path d="M9 5h19l10 10v26H9z" fill="#f2f2f0" /><path d="M13 17h8M13 21h8M13 25h8M13 29h22M13 33h22" stroke="#13558a" strokeWidth="2" /><rect x="24" y="14" width="14" height="11" fill="#7ba4c8" stroke="#13558a" /></Ic>
    </Tile>
    <Tile>
      <Ic w={50} h={50}>
        <circle cx="26" cy="24" r="20" fill="#1f66a8" />
        <circle cx="27" cy="17" r="11" fill="#3a8cc8" />
        <path d="M38 9c7 7 9 17 5 25-3 6-8 10-13 12 6-5 10-11 10-17 0-8-2-14-2-20z" fill="#f8c022" />
        <path d="M14 7C5 13 2 24 6 34c4 10 14 15 24 13 6-1 11-4 14-8-6 3-14 4-21 0-6-3-9-9-8-14 1-3 5-5 10-6 3 0 3-3 0-4-3 0-3-4-5-5-1 3-3 4-5 4-1-2-1-5-1-7z" fill="#ea6a24" />
        <path d="M19 30c5 3 12 3 17 1-4 5-13 6-17-1z" fill="#f6a028" />
      </Ic>
    </Tile>
    <Tile>
      <Ic w={46} h={46}><path d="M5 1h25l12 12v32H5z" fill="#1a8a2a" /><path d="M9 5h19l10 10v26H9z" fill="#f2f2f0" /><path d="M31 1h11v11z" fill="#7cc870" /><path d="M12 17h22v17H12zM12 22h22M12 28h22M19 17v17M26 17v17" fill="none" stroke="#1a8a2a" strokeWidth="1.4" /><rect x="27" y="28" width="11" height="11" fill="#fff" stroke="#888" /><path d="M30 37v-5M33 37v-7M36 37v-3" stroke="#3a76b4" strokeWidth="2" /></Ic>
    </Tile>
    <Tile>
      <Ic w={46} h={46}><path d="M5 14h36l2 30H3z" fill="#ee7830" /><path d="M15 16V9a8 8 0 0116 0v7" fill="none" stroke="#f08a48" strokeWidth="3" /><text x="23" y="37" textAnchor="middle" fontSize="22" fontWeight="700" fontFamily="Liberation Sans, sans-serif" fill="#fff">A</text></Ic>
    </Tile>
    <Tile>
      <Ic w={46} h={46}><path d="M5 1h25l12 12v32H5z" fill="#8a3208" /><path d="M9 5h19l10 10v26H9z" fill="#f2f2f0" /><rect x="10" y="18" width="26" height="18" fill="#fff" stroke="#a84a18" strokeWidth="2" /><rect x="10" y="18" width="26" height="3" fill="#a84a18" /><path d="M13 24h3M13 28h3M13 32h3M18 24h4M18 28h4M18 32h4" stroke="#a84a18" strokeWidth="2" /><path d="M25 32l3-5 3 2 3-5" fill="none" stroke="#3aa040" /></Ic>
    </Tile>
    <Tile>
      <Ic w={46} h={46}><circle cx="23" cy="23" r="15" fill="none" stroke="#e4e4e0" strokeWidth="9" /><circle cx="23" cy="23" r="19" fill="none" stroke="#e4e4e0" strokeWidth="5" strokeDasharray="6 8" /><path d="M6 40L30 14" stroke="#c8322a" strokeWidth="7" strokeLinecap="round" /><path d="M28 16l6-12 4 5 6-2-3 9-9 4z" fill="#eee" stroke="#aaa" /></Ic>
    </Tile>
    <Tile>
      <div className="w-[40px] h-[40px] rounded-[3px] bg-[#f2f2f0] flex flex-col items-center justify-center">
        <span className="font-['Liberation_Sans',sans-serif] font-bold text-[30px] leading-[26px] text-[#222]">a</span>
        <Ic w={34} h={9}><path d="M2 1c9 7 21 7 29 2" fill="none" stroke="#f29a1c" strokeWidth="2.4" /><path d="M27 1l6 0-2 6" fill="none" stroke="#f29a1c" strokeWidth="1.6" /></Ic>
      </div>
    </Tile>
    <Tile>
      <Ic w={46} h={46}><path d="M3 44l6-10h28l6 10z" fill="#f29a1c" /><path d="M20 3h6l9 34c-6 3-18 3-24 0z" fill="#f07a10" /><path d="M18 11h10l2 7H16zM14 24h18l2 8c-6 2-16 2-22 0z" fill="#e4e4e4" /></Ic>
    </Tile>
    <Tile>
      <Ic w={46} h={46}><ellipse cx="23" cy="21" rx="20" ry="19" fill="#4c0a12" /><ellipse cx="23" cy="42" rx="16" ry="3.5" fill="#2a0408" /><path d="M14 8c10-5 20 0 24 8-6-4-12-3-15 3-4 4-8 5-12 3 2-5 2-10 3-14z" fill="#8a1420" /><path d="M28 27c4-1 7-4 4-7-3-2-6 1-5 3" fill="none" stroke="#c0222c" strokeWidth="2" /></Ic>
    </Tile>
    <svg width="60" height="96" className="block shrink-0 -mt-[8px]">
      <path d="M6 76l3 18h41l4-18z" fill="#8a3028" opacity="0.7" />
      <path d="M16 77h28l3 14H13z" fill="#d8d8d4" stroke="#aaa" strokeDasharray="2 2" />
      <path d="M5 60l3 14h44l3-14z" fill="#8a3a30" opacity="0.7" />
      <rect x="10" y="66" width="40" height="6" rx="1" fill="#d8d8d4" />
      <rect x="10" y="71" width="40" height="3" fill="#444" />
      <path d="M5 45l3 14h44l3-14z" fill="#8a3a30" opacity="0.7" />
      <rect x="10" y="51" width="40" height="6" rx="1" fill="#d8d8d4" />
      <rect x="10" y="56" width="40" height="3" fill="#444" />
      <path d="M3 46l5-20h44l6 20z" fill="#c89ac8" stroke="#e8c8e0" />
      <rect x="12" y="31" width="36" height="12" fill="#7a4a70" stroke="#ddd" />
      <ellipse cx="40" cy="38" rx="13" ry="7" fill="#d8d8d4" stroke="#777" />
      <circle cx="40" cy="37" r="3" fill="#333" />
      <path d="M9 3h42l8 25H4z" fill="#d4d4d0" stroke="#a8a8a4" />
      <rect x="12" y="7" width="36" height="18" fill="#262624" stroke="#111" />
      <path d="M16 11l5 2.5-5 2.5M23 18h7" fill="none" stroke="#eee" strokeWidth="1.4" />
    </svg>
    <Pip cls="left-0 top-[664px] border-l-[5px] border-l-white" />
    <Pip cls="left-0 top-[695px] border-l-[5px] border-l-[#6ac0e8]" />
  </div>
)

export default function App() {
  return (
    <div className="w-[1024px] h-[768px] flex flex-col overflow-hidden bg-[#f2f1f0]">
      <Title />
      <div className="flex-1 flex min-h-0">
        <Launcher />
        <div className="flex-1 flex flex-col min-w-0">
          <Toolbar1 />
          <Toolbar2 />
          <div className="flex-1 flex min-h-0">
            <div className="w-[946px] shrink-0 flex flex-col min-h-0">
              <HRuler />
              <div className="flex-1 flex min-h-0">
                <div className="w-[48px] shrink-0 flex">
                  <VRuler />
                  <div className="ml-[23px] w-[4px] shrink-0 bg-gradient-to-r from-[#f2f1f0] to-[#c8c6c2]" />
                </div>
                <Page />
                <div className="w-[4px] shrink-0 bg-gradient-to-r from-[#cfcdc9] to-[#f2f1f0]" />
              </div>
            </div>
            <Scrollbar />
          </div>
          <FindBar />
          <Toolbar3 />
          <Status />
        </div>
      </div>
    </div>
  )
}
